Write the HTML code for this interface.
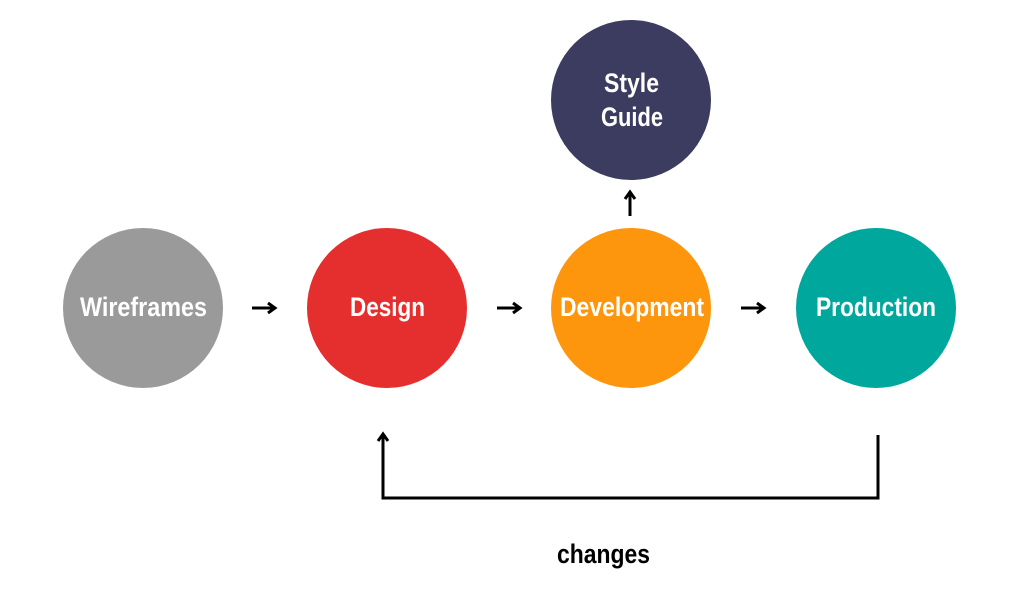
<!DOCTYPE html>
<html><head><meta charset="utf-8"><style>
html,body{margin:0;padding:0;background:#fff;width:1024px;height:600px;overflow:hidden}
text{font-family:"Liberation Sans Narrow","Liberation Sans",sans-serif;font-weight:bold;font-size:27px}
</style></head><body>
<svg width="1024" height="600" viewBox="0 0 1024 600" xmlns="http://www.w3.org/2000/svg">
<circle cx="143" cy="308" r="80" fill="#9a9a9a"/>
<circle cx="387" cy="308" r="80" fill="#e52f2f"/>
<circle cx="631" cy="308" r="80" fill="#fd960c"/>
<circle cx="876" cy="308" r="80" fill="#00a79d"/>
<circle cx="631" cy="100" r="80" fill="#3c3c60"/>
<g fill="#fff">
<text x="80" y="316" textLength="127" lengthAdjust="spacingAndGlyphs">Wireframes</text>
<text x="350" y="316" textLength="75" lengthAdjust="spacingAndGlyphs">Design</text>
<text x="560" y="316" textLength="144" lengthAdjust="spacingAndGlyphs">Development</text>
<text x="816" y="316" textLength="120" lengthAdjust="spacingAndGlyphs">Production</text>
<text x="604" y="92" textLength="55" lengthAdjust="spacingAndGlyphs">Style</text>
<text x="601" y="126" textLength="62" lengthAdjust="spacingAndGlyphs">Guide</text>
</g>
<text x="557" y="563" textLength="93" lengthAdjust="spacingAndGlyphs" fill="#000">changes</text>
<g stroke="#000" stroke-width="3" fill="none">
<path d="M252 308H274M268 303L275 308L268 313"/>
<path d="M497 308H519M513 303L520 308L513 313"/>
<path d="M741 308H763M757 303L764 308L757 313"/>
<path d="M630 216V193M625 199L630 192L635 199"/>
<path d="M383 436V498H878V435"/>
<path d="M378 441L383 434L388 441"/>
</g>
</svg>
</body></html>
